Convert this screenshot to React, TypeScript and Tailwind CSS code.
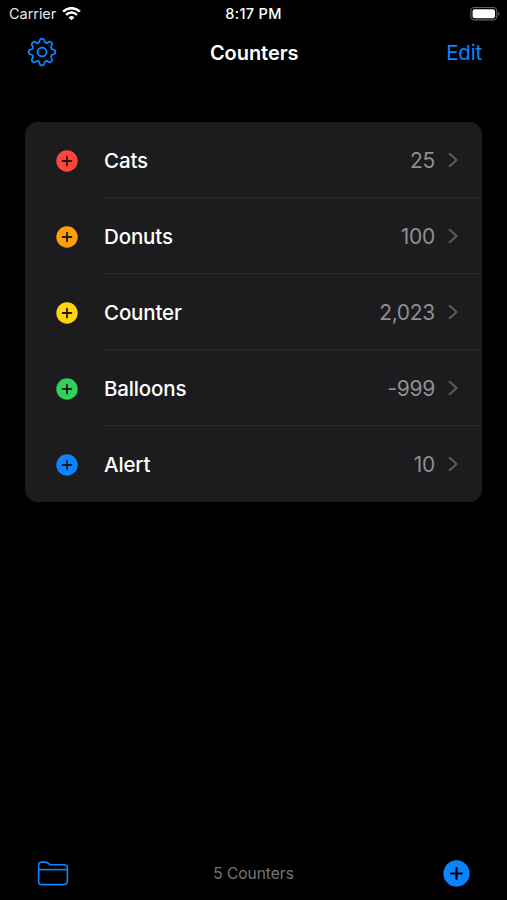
import { useState } from "react";
import clsx from "clsx";

// Sample counters for the list
const sampleCounters = [
  { name: "Cats", value: 25, color: "text-[#ff453a]" },
  { name: "Donuts", value: 100, color: "text-[#ff9f0a]" },
  { name: "Counter", value: 2023, color: "text-[#ffd60a]" },
  { name: "Balloons", value: -999, color: "text-[#30d158]" },
  { name: "Alert", value: 10, color: "text-[#0a84ff]" },
];

// Gear outline: eight rounded teeth around the hub
const gearPath = () => {
  const point = (radius: number, deg: number) => {
    const a = ((deg - 90) * Math.PI) / 180;
    return `${(15 + radius * Math.cos(a)).toFixed(2)} ${(15 + radius * Math.sin(a)).toFixed(2)}`;
  };
  let d = `M${point(13.1, -6)}`;
  for (let i = 0; i < 8; i++) {
    const t = i * 45;
    d += `Q${point(13.5, t)} ${point(13.1, t + 6)}`;
    d += `Q${point(12.9, t + 10)} ${point(11.5, t + 12)}`;
    d += `C${point(9.6, t + 15)} ${point(9.6, t + 30)} ${point(11.5, t + 33)}`;
    d += `Q${point(12.9, t + 35)} ${point(13.1, t + 39)}`;
  }
  return d + "Z";
};

function GearIcon() {
  return (
    <svg className="size-[30px]" viewBox="0 0 30 30" fill="none" stroke="currentColor" strokeWidth="1.8" strokeLinejoin="round">
      <path d={gearPath()} />
      <circle cx="15" cy="15" r="4.5" />
    </svg>
  );
}

function WifiIcon() {
  return (
    <svg className="h-[14px] w-[19px]" viewBox="0 0 19 14" fill="none" stroke="currentColor" strokeWidth="2.5">
      <path d="M1.1 4.6a12 12 0 0 1 16.8 0" />
      <path d="M4.1 7.8a7.7 7.7 0 0 1 10.8 0" />
      <path d="M9.5 13.3 6.6 10.4a4.1 4.1 0 0 1 5.8 0Z" fill="currentColor" stroke="none" />
    </svg>
  );
}

function BatteryIcon() {
  return (
    <svg className="h-[14px] w-[31px]" viewBox="0 0 31 14" fill="none">
      <rect x="0.8" y="0.5" width="26" height="12.4" rx="3.6" stroke="#626262" strokeWidth="1.2" />
      <rect x="2.6" y="2.2" width="22.4" height="9" rx="2" fill="#fff" />
      <path d="M28.2 4.5v4.4a2.5 2.5 0 0 0 0-4.4Z" fill="#626262" />
    </svg>
  );
}

function FolderIcon() {
  return (
    <svg className="h-[26px] w-[32px]" viewBox="0 0 32 26" fill="none" stroke="currentColor" strokeWidth="1.6" strokeLinejoin="round">
      <path d="M1.6 21.8V5.1C1.6 3.1 2.6 2.1 4.7 2.1h3.4c1.3 0 2 .3 2.9 1.1l.8.7c.7.6 1.2.8 2.3.8h12.8c2.3 0 3.5 1.1 3.5 3.3v13.3c0 2.2-1.2 3.3-3.5 3.3H4.7c-2 0-3.1-1-3.1-2.8Z" />
      <path d="M1.6 9.6h28.8" />
    </svg>
  );
}

function PlusCircle({ className }: { className?: string }) {
  return (
    <svg className={className} viewBox="0 0 22 22" fill="none">
      <circle cx="11" cy="11" r="10.7" fill="currentColor" stroke="none" />
      <path d="M11 6.6v8.8M6.6 11h8.8" strokeWidth="1.8" strokeLinecap="round" />
    </svg>
  );
}

function Chevron() {
  return (
    <svg className="h-[16px] w-[10px] text-[#5a5a5e]" viewBox="0 0 10 16" fill="none" stroke="currentColor" strokeWidth="2.2" strokeLinecap="round" strokeLinejoin="round">
      <path d="M1.6 1.8 8.6 8l-7 6.2" />
    </svg>
  );
}

export default function App() {
  const [counters] = useState(sampleCounters);

  return (
    <div className="flex h-[900px] w-[507px] flex-col overflow-hidden bg-black font-['Inter','Liberation_Sans',sans-serif] text-white">
      {/* Status Bar */}
      <div className="grid h-[27px] grid-cols-3 items-center pl-[9px] pr-[6px]">
        <div className="flex items-center gap-[6px] text-[14.5px] tracking-[-0.05px]">
          <span className="text-[#e6e6e6]">Carrier</span>
          <WifiIcon />
        </div>
        <span className="pr-[3px] text-center text-[14.5px] font-medium tracking-[0.35px]">8:17 PM</span>
        <div className="flex justify-end">
          <BatteryIcon />
        </div>
      </div>

      {/* Navigation Bar */}
      <div className="grid h-[51px] grid-cols-3 items-center pl-[26.5px] pr-[25px]">
        <button className="pb-px text-[#0a84ff]">
          <GearIcon />
        </button>
        <h1 className="text-center text-[20px] font-semibold tracking-[-0.05px]">Counters</h1>
        <button className="pt-0.5 text-right text-[20.5px] tracking-[-0.2px] text-[#0a84ff]">Edit</button>
      </div>

      {/* Counter List */}
      <ul className="mx-[25px] mt-[44px] h-[380px] overflow-hidden rounded-[13px] bg-[#1c1c1e]">
        {counters.map((counter, i) => (
          <li key={counter.name} className="flex h-[76px] pl-[31px]">
            <button className={clsx("mr-[26px] shrink-0 pt-px", counter.color)}>
              <PlusCircle className="size-[22px] stroke-[#1c1c1e]" />
            </button>
            <div className={clsx("flex flex-1 items-center pr-[24px]", i < counters.length - 1 && "border-b border-[#28282a]")}>
              <span className="flex-1 pt-[3px] text-[20.5px] font-medium tracking-[-0.15px]">{counter.name}</span>
              <span className="mr-[13px] pt-[2px] text-[21px] tracking-[-0.3px] text-[#8e8e93]">{counter.value.toLocaleString("en-US")}</span>
              <Chevron />
            </div>
          </li>
        ))}
      </ul>

      {/* Toolbar */}
      <div className="mt-auto grid h-[54px] grid-cols-3 items-center pl-[37px] pr-[37px]">
        <button className="text-[#0a84ff]">
          <FolderIcon />
        </button>
        <span className="pt-0.5 text-center text-[15.5px] text-[#77777b]">5 Counters</span>
        <button className="justify-self-end text-[#0a84ff]">
          <PlusCircle className="size-[27px] stroke-black" />
        </button>
      </div>
    </div>
  );
}
